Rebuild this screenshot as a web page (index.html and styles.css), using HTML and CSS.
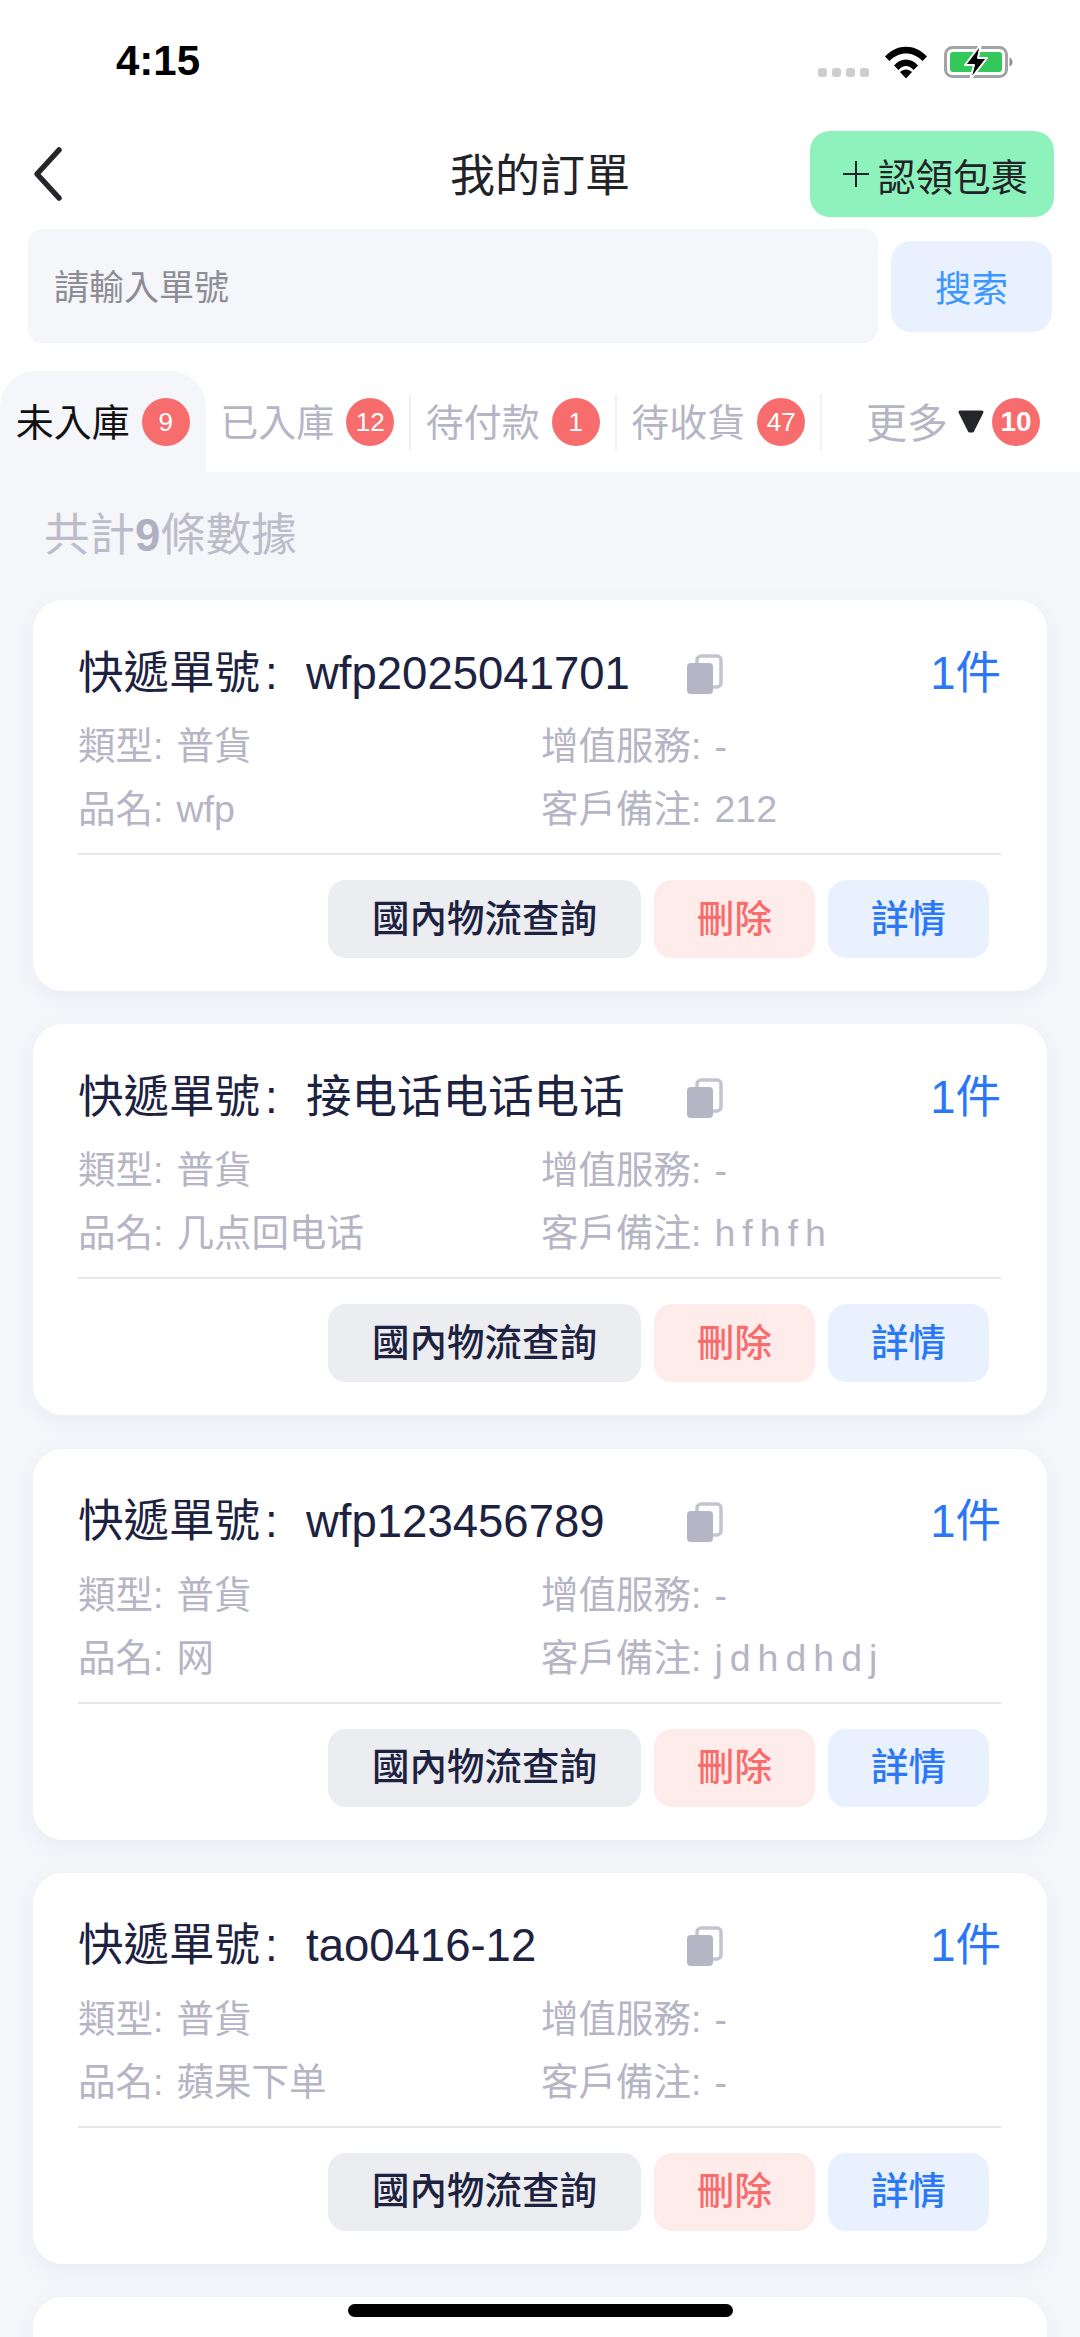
FILE: index.html
```html
<!DOCTYPE html>
<html lang="zh-Hant">
<head>
<meta charset="utf-8">
<title>我的訂單</title>
<link rel="stylesheet" href="styles.css">
</head>
<body>
<header class="top">
  <div class="status">
    <span class="time">4:15</span>
    <div class="status-icons">
      <div class="dots"><i></i><i></i><i></i><i></i></div>
      <svg class="wifi" viewBox="0 0 44 34" width="44" height="34">
        <path d="M1 11.5C13 -1.5 31 -1.5 43 11.5L38.5 16C29 6 15 6 5.5 16Z" fill="#000"/>
        <path d="M10 20.5C16.500 12.500 27.500 12.500 34 20.500L29.500 25C25 19.500 19 19.500 14.500 25Z" fill="#000"/>
        <path d="M16 27C19.500 23.500 24.500 23.500 28 27L22 33.500Z" fill="#000"/>
      </svg>
      <svg class="battery" viewBox="0 0 70 36" width="70" height="36">
        <rect x="1.500" y="3.500" width="61" height="29" rx="7" fill="none" stroke="#a3a3a3" stroke-width="3"/>
        <rect x="6" y="8" width="52" height="20" rx="3" fill="#34c759"/>
        <path d="M65.500 13.500C67.500 14.500 68.500 16 68.500 18C68.500 20 67.500 21.500 65.500 22.500Z" fill="#8e8e8e"/>
        <path d="M37 0L21 21H30L26 36L43 14H34Z" fill="#000" stroke="#fff" stroke-width="2" stroke-linejoin="round"/>
      </svg>
    </div>
  </div>
  <nav class="nav">
    <svg class="back" viewBox="0 0 32 56" width="32" height="56">
      <path d="M27 4L5 28L27 52" fill="none" stroke="#25262b" stroke-width="5.500" stroke-linecap="round" stroke-linejoin="round"/>
    </svg>
    <h1 class="title">我的訂單</h1>
    <button class="claim"><span class="plus"></span>認領包裹</button>
  </nav>
  <div class="search">
    <div class="search-input">請輸入單號</div>
    <button class="search-btn">搜索</button>
  </div>
  <div class="tabs">
    <div class="tab active"><div class="tab-in"><span>未入庫</span><b class="badge">9</b></div></div>
    <div class="tab"><div class="tab-in sep"><span>已入庫</span><b class="badge">12</b></div></div>
    <div class="tab"><div class="tab-in sep"><span>待付款</span><b class="badge">1</b></div></div>
    <div class="tab"><div class="tab-in sep"><span>待收貨</span><b class="badge">47</b></div></div>
    <div class="tab more"><div class="tab-in"><span class="more-label">更多</span><svg class="tri" viewBox="0 0 26 24" width="26" height="24"><path d="M2 2H24L14.500 21H11.500Z" fill="#25262b" stroke="#25262b" stroke-width="3" stroke-linejoin="round"/></svg><b class="badge strong">10</b></div></div>
  </div>
</header>
<main class="list">
  <p class="count">共計<b>9</b>條數據</p>

  <article class="card">
    <div class="card-head"><span class="no-label">快遞單號<span class="colon">:</span></span><span class="no">wfp2025041701</span>
      <svg class="copy" viewBox="0 0 36 40" width="36" height="40"><rect x="10" y="2" width="24" height="31" rx="4" fill="none" stroke="#c4c3d0" stroke-width="3.500"/><rect x="0" y="9" width="26" height="31" rx="4" fill="#b6b5c5"/></svg>
      <span class="qty">1件</span></div>
    <div class="meta">
      <div class="cell"><span>類型:</span><span>普貨</span></div><div class="cell"><span>增值服務:</span><span>-</span></div>
      <div class="cell"><span>品名:</span><span>wfp</span></div><div class="cell"><span>客戶備注:</span><span>212</span></div>
    </div>
    <div class="actions"><button class="btn gray">國內物流查詢</button><button class="btn red">刪除</button><button class="btn blue">詳情</button></div>
  </article>

  <article class="card">
    <div class="card-head"><span class="no-label">快遞單號<span class="colon">:</span></span><span class="no">接电话电话电话</span>
      <svg class="copy" viewBox="0 0 36 40" width="36" height="40"><rect x="10" y="2" width="24" height="31" rx="4" fill="none" stroke="#c4c3d0" stroke-width="3.500"/><rect x="0" y="9" width="26" height="31" rx="4" fill="#b6b5c5"/></svg>
      <span class="qty">1件</span></div>
    <div class="meta">
      <div class="cell"><span>類型:</span><span>普貨</span></div><div class="cell"><span>增值服務:</span><span>-</span></div>
      <div class="cell"><span>品名:</span><span>几点回电话</span></div><div class="cell"><span>客戶備注:</span><span class="spaced">hfhfh</span></div>
    </div>
    <div class="actions"><button class="btn gray">國內物流查詢</button><button class="btn red">刪除</button><button class="btn blue">詳情</button></div>
  </article>

  <article class="card">
    <div class="card-head"><span class="no-label">快遞單號<span class="colon">:</span></span><span class="no">wfp123456789</span>
      <svg class="copy" viewBox="0 0 36 40" width="36" height="40"><rect x="10" y="2" width="24" height="31" rx="4" fill="none" stroke="#c4c3d0" stroke-width="3.500"/><rect x="0" y="9" width="26" height="31" rx="4" fill="#b6b5c5"/></svg>
      <span class="qty">1件</span></div>
    <div class="meta">
      <div class="cell"><span>類型:</span><span>普貨</span></div><div class="cell"><span>增值服務:</span><span>-</span></div>
      <div class="cell"><span>品名:</span><span>网</span></div><div class="cell"><span>客戶備注:</span><span class="spaced">jdhdhdj</span></div>
    </div>
    <div class="actions"><button class="btn gray">國內物流查詢</button><button class="btn red">刪除</button><button class="btn blue">詳情</button></div>
  </article>

  <article class="card">
    <div class="card-head"><span class="no-label">快遞單號<span class="colon">:</span></span><span class="no">tao0416-12</span>
      <svg class="copy" viewBox="0 0 36 40" width="36" height="40"><rect x="10" y="2" width="24" height="31" rx="4" fill="none" stroke="#c4c3d0" stroke-width="3.500"/><rect x="0" y="9" width="26" height="31" rx="4" fill="#b6b5c5"/></svg>
      <span class="qty">1件</span></div>
    <div class="meta">
      <div class="cell"><span>類型:</span><span>普貨</span></div><div class="cell"><span>增值服務:</span><span>-</span></div>
      <div class="cell"><span>品名:</span><span>蘋果下单</span></div><div class="cell"><span>客戶備注:</span><span>-</span></div>
    </div>
    <div class="actions"><button class="btn gray">國內物流查詢</button><button class="btn red">刪除</button><button class="btn blue">詳情</button></div>
  </article>

  <article class="card stub"></article>
</main>
<div class="home-bar"></div>
</body>
</html>
```
FILE: styles.css
```css
* { box-sizing: border-box; }
html, body { margin: 0; padding: 0; }
body {
  position: relative;
  width: 1080px;
  height: 2337px;
  overflow: hidden;
  background: #f4f6fa;
  font-family: "Liberation Sans", "Noto Sans CJK TC", sans-serif;
  color: #1d2240;
}
button { font-family: inherit; border: 0; padding: 0; margin: 0; }

.top { background: #fff; height: 472px; }

.status {
  height: 131px;
  display: flex;
  align-items: flex-start;
  justify-content: space-between;
  padding: 37px 66px 0 116px;
}
.time { font-size: 42px; line-height: 48px; font-weight: 700; color: #000; }
.status-icons { display: flex; align-items: flex-start; padding-top: 7px; }
.dots { display: flex; gap: 5px; margin-top: 24px; margin-right: 15px; }
.dots i { width: 9px; height: 9px; border-radius: 3px; background: #cdcdcd; }
.wifi { margin-top: 1px; margin-right: 16px; }
.battery { margin-top: 0; }

.nav {
  position: relative;
  height: 86px;
  display: flex;
  align-items: center;
  justify-content: space-between;
  padding: 0 26px 0 32px;
}
.back { display: block; }
.title {
  position: absolute;
  left: 0;
  right: 0;
  top: 0;
  margin: 0;
  padding-top: 3px;
  text-align: center;
  font-size: 45px;
  line-height: 86px;
  font-weight: 400;
  color: #222329;
}
.claim {
  position: relative;
  width: 244px;
  height: 86px;
  border-radius: 20px;
  background: #8df2bb;
  color: #222329;
  font-size: 37.500px;
  display: flex;
  align-items: center;
  padding-left: 33px;
  gap: 9px;
}
.plus { position: relative; width: 26px; height: 26px; flex: none; }
.plus::before, .plus::after { content: ""; position: absolute; background: #222329; }
.plus::before { left: 0; right: 0; top: 12px; height: 2px; }
.plus::after { top: 0; bottom: 0; left: 12px; width: 2px; }

.search {
  display: flex;
  align-items: center;
  gap: 13px;
  margin: 12px 28px 0 28px;
  height: 114px;
}
.search-input {
  width: 850px;
  height: 114px;
  border-radius: 14px;
  background: #f4f6fa;
  color: #8d8d95;
  font-size: 35px;
  line-height: 114px;
  padding: 2px 0 0 26px;
}
.search-btn {
  width: 161px;
  height: 91px;
  border-radius: 20px;
  background: #e9f1ff;
  color: #3b97ff;
  font-size: 36.500px;
}

.tabs { display: flex; margin-top: 28px; height: 101px; }
.tab { width: 205.500px; flex: none; display: flex; align-items: center; }
.tab.more { flex: 1; }
.tab.active { background: #f4f6fa; border-radius: 36px 36px 0 0; color: #000; }
.tab-in {
  width: 100%;
  height: 56px;
  display: flex;
  align-items: center;
  justify-content: center;
  gap: 12px;
  font-size: 38px;
  color: #b6b5c5;
}
.tab-in span { position: relative; top: -2px; }
.active .tab-in { color: #111; }
.tab-in.sep { border-right: 2px solid #f2f2f6; }
.more .tab-in { justify-content: flex-start; padding-left: 44px; gap: 0; }
.more-label { font-size: 41px; margin-right: 10px; }
.tri { margin-right: 8px; }
.badge {
  width: 48px;
  height: 48px;
  flex: none;
  border-radius: 50%;
  background: #f76d6d;
  color: #fff;
  font-size: 26px;
  font-weight: 400;
  line-height: 48px;
  text-align: center;
}
.badge.strong { font-weight: 700; font-size: 28px; }

.list { display: flex; flex-direction: column; padding: 0 33px; }
.count {
  margin: 0;
  height: 128px;
  padding: 39px 0 0 11px;
  font-size: 45.500px;
  line-height: 50px;
  color: #bcbccb;
}
.count b { font-weight: 700; color: #b0b0c2; }

.card {
  flex: none;
  height: 391px;
  margin-bottom: 33.250px;
  background: #fff;
  border-radius: 30px;
  padding: 48px 46px 0 45px;
  box-shadow: 0 6px 22px rgba(40, 50, 90, 0.05);
}
.card.stub { height: 40px; margin-bottom: 0; padding: 0; border-radius: 30px 30px 0 0; }
.card-head { display: flex; align-items: center; height: 50px; padding-top: 1px; font-size: 45.500px; line-height: 50px; }
.no-label { width: 228px; flex: none; white-space: nowrap; }
.colon { margin-left: 5px; }
.no { width: 381px; flex: none; white-space: nowrap; }
.copy { flex: none; }
.qty { margin-left: auto; color: #2a78f5; }

.meta {
  display: grid;
  grid-template-columns: 463px 1fr;
  grid-auto-rows: 63px;
  margin-top: 17px;
  font-size: 37.500px;
  line-height: 63px;
  color: #b6b5c5;
}
.cell { display: flex; gap: 13px; white-space: nowrap; }
.spaced { letter-spacing: 7px; }

.actions {
  display: flex;
  justify-content: flex-end;
  gap: 13px;
  margin-top: 12px;
  padding: 25px 12px 0 0;
  border-top: 2px solid #e6e7ec;
}
.btn { height: 78px; border-radius: 18px; font-size: 37.500px; font-weight: 500; width: 161px; padding-bottom: 8px; }
.btn.gray { width: 313px; background: #ecedf0; color: #1d2240; }
.btn.red { background: #fdecea; color: #f76d6d; }
.btn.blue { background: #e9f1ff; color: #2a78f5; }

.home-bar {
  position: absolute;
  left: 348px;
  top: 2304px;
  width: 385px;
  height: 13px;
  border-radius: 7px;
  background: #000;
}
```
